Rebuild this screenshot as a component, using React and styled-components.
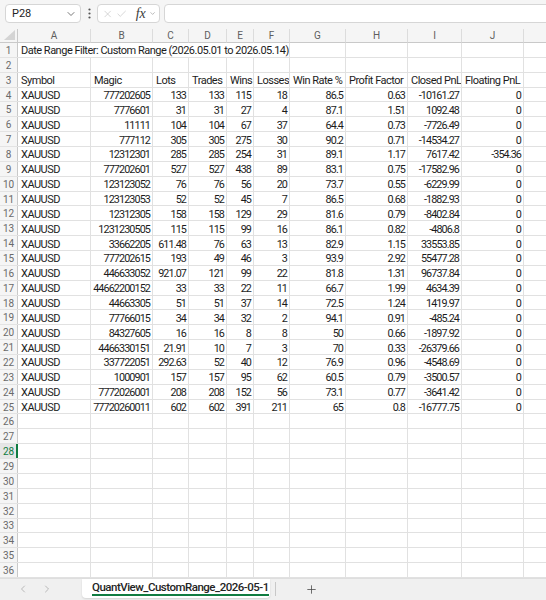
import styled, { createGlobalStyle } from "styled-components";
import { ChevronDown, ChevronLeft, ChevronRight, Plus, X, Check } from "lucide-react";

const GlobalStyle = createGlobalStyle`
  body {
    margin: 0;
    background: #ffffff;
    font-family: Roboto, "Liberation Sans", sans-serif;
  }
`;

const COLS = ["A", "B", "C", "D", "E", "F", "G", "H", "I", "J", "K"];
const TEMPLATE = "18px 73px 62px 36px 38px 27px 36px 56px 62px 54px 62px 62px";
const ROW_COUNT = 36;
const ACTIVE_ROW = 28;

const HEADERS = [
  "Symbol",
  "Magic",
  "Lots",
  "Trades",
  "Wins",
  "Losses",
  "Win Rate %",
  "Profit Factor",
  "Closed PnL",
  "Floating PnL",
];

// magic, lots, trades, wins, losses, win rate, pf, closed, floating
const DATA = [
  ["777202605", "133", "133", "115", "18", "86.5", "0.63", "-10161.27", "0"],
  ["7776601", "31", "31", "27", "4", "87.1", "1.51", "1092.48", "0"],
  ["11111", "104", "104", "67", "37", "64.4", "0.73", "-7726.49", "0"],
  ["777112", "305", "305", "275", "30", "90.2", "0.71", "-14534.27", "0"],
  ["12312301", "285", "285", "254", "31", "89.1", "1.17", "7617.42", "-354.36"],
  ["777202601", "527", "527", "438", "89", "83.1", "0.75", "-17582.96", "0"],
  ["123123052", "76", "76", "56", "20", "73.7", "0.55", "-6229.99", "0"],
  ["123123053", "52", "52", "45", "7", "86.5", "0.68", "-1882.93", "0"],
  ["12312305", "158", "158", "129", "29", "81.6", "0.79", "-8402.84", "0"],
  ["1231230505", "115", "115", "99", "16", "86.1", "0.82", "-4806.8", "0"],
  ["33662205", "611.48", "76", "63", "13", "82.9", "1.15", "33553.85", "0"],
  ["777202615", "193", "49", "46", "3", "93.9", "2.92", "55477.28", "0"],
  ["446633052", "921.07", "121", "99", "22", "81.8", "1.31", "96737.84", "0"],
  ["44662200152", "33", "33", "22", "11", "66.7", "1.99", "4634.39", "0"],
  ["44663305", "51", "51", "37", "14", "72.5", "1.24", "1419.97", "0"],
  ["77766015", "34", "34", "32", "2", "94.1", "0.91", "-485.24", "0"],
  ["84327605", "16", "16", "8", "8", "50", "0.66", "-1897.92", "0"],
  ["4466330151", "21.91", "10", "7", "3", "70", "0.33", "-26379.66", "0"],
  ["337722051", "292.63", "52", "40", "12", "76.9", "0.96", "-4548.69", "0"],
  ["1000901", "157", "157", "95", "62", "60.5", "0.79", "-3500.57", "0"],
  ["7772026001", "208", "208", "152", "56", "73.1", "0.77", "-3641.42", "0"],
  ["77720260011", "602", "602", "391", "211", "65", "0.8", "-16777.75", "0"],
];

const Window = styled.div`
  width: 546px;
  height: 600px;
  display: flex;
  flex-direction: column;
  overflow: hidden;
  background: #ffffff;
`;

const Toolbar = styled.div`
  height: 29px;
  flex: none;
  display: flex;
  align-items: flex-start;
  padding: 4px 0 0 5px;
  box-sizing: border-box;
  background: #f5f5f5;
`;

const Box = styled.div`
  height: 19px;
  box-sizing: border-box;
  background: #ffffff;
  border: 1px solid #d6d6d6;
  border-radius: 4px;
  display: flex;
  align-items: center;
`;

const NameBox = styled(Box)`
  width: 76px;
  justify-content: space-between;
  padding: 0 3px 0 6px;
  font-size: 11px;
  color: #242424;
`;

const Kebab = styled.div`
  width: 16px;
  height: 19px;
  display: flex;
  align-items: center;
  justify-content: center;
`;

const FxBox = styled(Box)`
  width: 63px;
  padding: 0 3px 0 4px;
  gap: 3px;
`;

const Fx = styled.span`
  font-family: "Liberation Serif", serif;
  font-style: italic;
  font-size: 14px;
  color: #3b3b3b;
  margin-left: 5px;
  line-height: 1;
`;

const FormulaInput = styled(Box)`
  flex: 1;
  margin: 0 -6px 0 4px;
`;

const Sheet = styled.div`
  flex: 1;
  overflow: hidden;
  display: grid;
  grid-template-columns: ${TEMPLATE};
  grid-template-rows: 14px;
  grid-auto-rows: 14.86px;
  align-content: start;
  font-size: 11px;
  color: #1c1c1c;
`;

const Corner = styled.div`
  position: relative;
  background: #f5f5f5;
  border-right: 1px solid #c9c9c9;
  border-bottom: 1px solid #c9c9c9;
  box-sizing: border-box;

  &::after {
    content: "";
    position: absolute;
    right: 2px;
    bottom: 2px;
    width: 11px;
    height: 10px;
    background: #d4d4d4;
    clip-path: polygon(100% 0, 100% 100%, 0 100%);
  }
`;

const ColHead = styled.div`
  background: #f5f5f5;
  box-sizing: border-box;
  border-right: 1px solid #dcdcdc;
  border-bottom: 1px solid #c9c9c9;
  display: flex;
  align-items: center;
  justify-content: center;
  font-size: 10px;
  color: #5e5e5e;
`;

const RowHead = styled.div`
  background: ${(p) => (p.$active ? "#e6e6e6" : "#f5f5f5")};
  box-sizing: border-box;
  border-bottom: 1px solid #e3e3e3;
  box-shadow: ${(p) =>
    p.$active ? "inset -2px 0 0 #107c41" : "inset -1px 0 0 #c9c9c9"};
  display: flex;
  align-items: center;
  justify-content: center;
  padding: 1px 1px 0 0;
  font-size: 10px;
  color: ${(p) => (p.$active ? "#107c41" : "#6a6a6a")};
`;

const Cell = styled.div`
  box-sizing: border-box;
  border-right: 1px solid #e1e1e1;
  border-bottom: 1px solid #e1e1e1;
  padding: 2px 2px 0 3px;
  display: flex;
  align-items: center;
  justify-content: ${(p) => (p.$num ? "flex-end" : "flex-start")};
  font-size: ${(p) => (p.$num ? "10.8px" : "11px")};
  letter-spacing: ${(p) => (p.$num ? "-0.9px" : "-0.5px")};
  white-space: nowrap;
  overflow: hidden;
  grid-column: ${(p) => (p.$span ? `span ${p.$span}` : "auto")};
`;

const TabBar = styled.div`
  height: 22px;
  flex: none;
  display: flex;
  align-items: flex-start;
  background: #f0f0f0;
  border-top: 1px solid #dedede;
  box-sizing: border-box;
`;

const NavButtons = styled.div`
  width: 82px;
  height: 20px;
  display: flex;
  align-items: center;
  padding-left: 17px;
  gap: 12px;
  box-sizing: border-box;
`;

const SheetTab = styled.div`
  width: 188px;
  height: 19px;
  background: #ffffff;
  border-radius: 0 0 4px 4px;
  box-shadow: 0 1px 2px rgba(0, 0, 0, 0.12);
  padding-left: 10px;
  box-sizing: border-box;
  display: flex;
  align-items: flex-start;
`;

const TabLabel = styled.span`
  font-size: 11.5px;
  font-weight: 500;
  letter-spacing: -0.5px;
  color: #242424;
  line-height: 14px;
  padding-top: 1px;
  border-bottom: 2px solid #107c41;
`;

const Divider = styled.div`
  width: 1px;
  height: 14px;
  margin: 3px 0 0 5px;
  background: #c8c8c8;
`;

const AddButton = styled.div`
  width: 70px;
  height: 20px;
  display: flex;
  align-items: center;
  justify-content: center;
  color: #444444;
`;

function Dots() {
  return (
    <svg width="3" height="11" viewBox="0 0 3 11">
      <circle cx="1.5" cy="1.5" r="1.1" fill="#555" />
      <circle cx="1.5" cy="5.5" r="1.1" fill="#555" />
      <circle cx="1.5" cy="9.5" r="1.1" fill="#555" />
    </svg>
  );
}

function rowCells(r) {
  if (r === 1) {
    return [
      <Cell key="t" $span={6}>
        Date Range Filter: Custom Range (2026.05.01 to 2026.05.14)
      </Cell>,
      ...COLS.slice(6).map((c) => <Cell key={c} />),
    ];
  }
  if (r === 3) {
    return COLS.map((c, i) => <Cell key={c}>{HEADERS[i]}</Cell>);
  }
  const d = DATA[r - 4];
  if (d) {
    return COLS.map((c, i) => {
      if (i === 0) return <Cell key={c}>XAUUSD</Cell>;
      if (i > 9) return <Cell key={c} />;
      return (
        <Cell key={c} $num>
          {d[i - 1]}
        </Cell>
      );
    });
  }
  return COLS.map((c) => <Cell key={c} />);
}

export default function App() {
  const rows = Array.from({ length: ROW_COUNT }, (_, i) => i + 1);

  return (
    <>
      <GlobalStyle />
      <Window>
        <Toolbar>
          <NameBox>
            <span>P28</span>
            <ChevronDown size={12} color="#555" strokeWidth={1.6} />
          </NameBox>
          <Kebab>
            <Dots />
          </Kebab>
          <FxBox>
            <X size={14} color="#bdbdbd" strokeWidth={1.3} />
            <Check size={14} color="#bdbdbd" strokeWidth={1.3} />
            <Fx>fx</Fx>
            <ChevronDown size={9} color="#777" strokeWidth={1.6} />
          </FxBox>
          <FormulaInput />
        </Toolbar>

        <Sheet>
          <Corner />
          {COLS.map((c) => (
            <ColHead key={c}>{c}</ColHead>
          ))}
          {rows.map((r) => [
            <RowHead key={`h${r}`} $active={r === ACTIVE_ROW}>
              {r}
            </RowHead>,
            ...rowCells(r).map((cell) => ({ ...cell, key: `${r}-${cell.key}` })),
          ])}
        </Sheet>

        <TabBar>
          <NavButtons>
            <ChevronLeft size={12} color="#a6a6a6" strokeWidth={1.5} />
            <ChevronRight size={12} color="#a6a6a6" strokeWidth={1.5} />
          </NavButtons>
          <SheetTab>
            <TabLabel>QuantView_CustomRange_2026-05-1</TabLabel>
          </SheetTab>
          <Divider />
          <AddButton>
            <Plus size={13} strokeWidth={1.4} />
          </AddButton>
        </TabBar>
      </Window>
    </>
  );
}
